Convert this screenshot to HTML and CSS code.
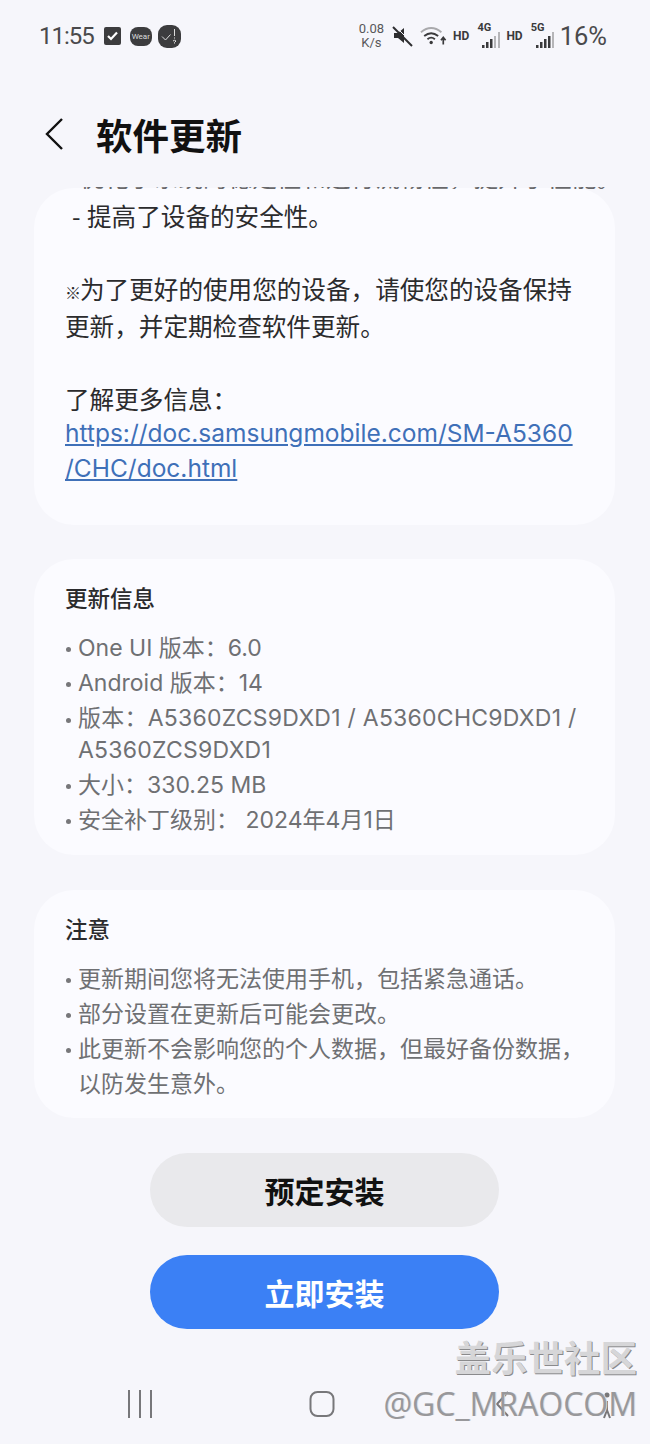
FILE: index.html
```html
<!DOCTYPE html>
<html lang="zh-CN">
<head>
    <meta charset="UTF-8">
    <meta name="viewport" content="width=device-width, initial-scale=1.0">
    <title>软件更新</title>
    <link rel="stylesheet" href="styles.css">
</head>
<body>
    <div class="phone">
        <div class="status-bar">
            <div class="status-left">
                <span class="clock">11:55</span>
                <svg width="17" height="18" viewBox="0 0 17 18"><rect width="17" height="18" rx="2" fill="#3c3c3e"/><path d="M4 9l3 3 6-6.500" fill="none" stroke="#fff" stroke-width="2.200"/></svg>
                <span class="wear-icon">Wear</span>
                <svg class="alert-icon" width="23" height="23" viewBox="0 0 23 23"><rect width="23" height="23" rx="9" fill="#3c3c3e"/><path d="M4 11.500l3.500 3.500 5-5.500" fill="none" stroke="#ddd" stroke-width="1"/><path d="M16.500 4v7M16.500 12.500v1M15 16q1.500-1.500 3 0l-1.500 1.500v1" fill="none" stroke="#ddd" stroke-width="1"/></svg>
            </div>
            <div class="status-right">
                <span class="speed">0.08<br>K/s</span>
                <svg class="mute" width="22" height="22" viewBox="0 0 22 22"><path d="M2 8h4l6-5v15l-6-5H2z" fill="#2d2d2f"/><path d="M1 2l19 19" stroke="#2d2d2f" stroke-width="2"/><path d="M1 2l19 19" stroke="#f6f6fb" stroke-width="1" transform="translate(1.500 -1.500)"/></svg>
                <svg class="wifi" width="27" height="22" viewBox="0 0 29 22"><path d="M1 7q11-9 22 0" fill="none" stroke="#a9a9ac" stroke-width="2"/><path d="M4.500 11q7.500-6 15 0M8 14.500q4-3.500 8 0" fill="none" stroke="#3a3a3c" stroke-width="2"/><circle cx="12" cy="18" r="1.800" fill="#3a3a3c"/><path d="M25 20v-7M22.500 15.500l2.500-3 2.500 3" fill="none" stroke="#3a3a3c" stroke-width="1.800"/></svg>
                <span class="hd">HD</span>
                <span class="signal">
                    <span class="net">4G</span>
                    <svg width="19" height="22" viewBox="0 0 19 22"><path d="M1 18h2.500v3H1zM5 15h2.500v6H5zM9 12h2.500v9H9z" fill="#3a3a3c"/><path d="M13 9h2v12h-2zM17 5h2v16h-2z" fill="#b5b5b8"/></svg>
                </span>
                <span class="hd">HD</span>
                <span class="signal">
                    <span class="net">5G</span>
                    <svg width="19" height="22" viewBox="0 0 19 22"><path d="M1 18h2.500v3H1zM5 15h2.500v6H5zM9 12h2.500v9H9zM13 9h2.500v12H13z" fill="#3a3a3c"/><path d="M17 5h2v16h-2z" fill="#b5b5b8"/></svg>
                </span>
                <span class="battery">16%</span>
            </div>
        </div>

        <div class="title-bar">
            <svg class="back" width="20" height="34" viewBox="0 0 20 34"><path d="M18 2L3 17l15 15" fill="none" stroke="#111" stroke-width="2.400"/></svg>
            <h1>软件更新</h1>
        </div>

        <div class="content">
            <div class="card card-notes">
                <div class="notes-clip">
                    <p class="note-line cut-line">优化了系统的稳定性和运行流畅性，提升了性能。</p>
                </div>
                <p class="note-line"><span class="dash">-</span>提高了设备的安全性。</p>
                <p class="note-line">&nbsp;</p>
                <p class="note-line"><span class="ref-mark">※</span>为了更好的使用您的设备，请使您的设备保持<br>更新，并定期检查软件更新。</p>
                <p class="note-line">&nbsp;</p>
                <p class="note-line">了解更多信息：</p>
                <a class="doc-link" href="#">https://doc.samsungmobile.com/SM-A5360<br>/CHC/doc.html</a>
            </div>

            <div class="card card-info">
                <h2>更新信息</h2>
                <ul class="info-list">
                    <li>One UI 版本：6.0</li>
                    <li>Android 版本：14</li>
                    <li class="tight">版本：A5360ZCS9DXD1 / A5360CHC9DXD1 / A5360ZCS9DXD1</li>
                    <li>大小：330.25 MB</li>
                    <li>安全补丁级别： 2024年4月1日</li>
                </ul>
            </div>

            <div class="card card-info card-last">
                <h2>注意</h2>
                <ul class="info-list">
                    <li>更新期间您将无法使用手机，包括紧急通话。</li>
                    <li>部分设置在更新后可能会更改。</li>
                    <li>此更新不会影响您的个人数据，但最好备份数据，以防发生意外。</li>
                </ul>
            </div>

            <div class="actions">
                <button type="button" class="btn btn-grey">预定安装</button>
                <button type="button" class="btn btn-blue">立即安装</button>
            </div>
        </div>

        <div class="nav-bar">
            <svg width="26" height="28" viewBox="0 0 26 28"><path d="M2 0v28M13 0v28M24 0v28" stroke="#77777a" stroke-width="2" fill="none"/></svg>
            <svg width="26" height="28" viewBox="0 0 26 28"><rect x="1.500" y="2" width="23" height="24" rx="7" fill="none" stroke="#77777a" stroke-width="2"/></svg>
            <svg width="26" height="28" viewBox="0 0 26 28"><path d="M17 2L6 14l11 12" fill="none" stroke="#77777a" stroke-width="2"/></svg>
            <svg class="a11y" width="20" height="28" viewBox="0 0 20 28"><circle cx="10" cy="3" r="2.500" fill="#77777a"/><path d="M10 9v9l-3 8M10 18l3 8" fill="none" stroke="#77777a" stroke-width="2"/></svg>
        </div>

        <div class="watermark">
            <div class="wm-title">盖乐世社区</div>
            <div class="wm-user">@GC_MRAOCOM</div>
        </div>
    </div>
</body>
</html>
```

FILE: styles.css
```css
* {
    box-sizing: border-box;
}
body {
    margin: 0;
    padding: 0;
    background-color: #f6f6fb;
    font-family: Inter, "Noto Sans CJK SC", sans-serif;
    color: #2b2b2d;
}
.phone {
    position: relative;
    width: 650px;
    height: 1444px;
    overflow: hidden;
}
.status-bar {
    height: 72px;
    padding: 0 43px 0 39px;
    display: flex;
    justify-content: space-between;
    align-items: center;
}
.status-left {
    display: flex;
    align-items: center;
    gap: 8px;
}
.clock {
    font-family: Roboto, sans-serif;
    font-size: 24px;
    letter-spacing: -1px;
    color: #4a4a4c;
    margin-right: 2px;
}
.wear-icon {
    width: 22px;
    height: 19px;
    margin-left: 1px;
    border-radius: 8px;
    background: #3c3c3e;
    color: #ddd;
    font-family: Roboto, sans-serif;
    font-size: 8px;
    line-height: 19px;
    text-align: center;
}
.alert-icon {
    margin-left: -2px;
}
.status-right {
    display: flex;
    align-items: center;
    gap: 8px;
}
.speed {
    font-family: Roboto, sans-serif;
    font-size: 13px;
    line-height: 14px;
    text-align: center;
    color: #58585a;
}
.wifi {
    margin-left: -2px;
}
.hd {
    margin-left: -2px;
    font-family: Roboto, sans-serif;
    font-size: 12px;
    font-weight: 700;
    color: #3a3a3c;
}
.signal {
    position: relative;
    width: 23px;
    height: 22px;
}
.net {
    position: absolute;
    left: 0;
    top: -4px;
    font-family: Roboto, sans-serif;
    font-size: 11px;
    font-weight: 700;
    color: #3a3a3c;
}
.signal svg {
    position: absolute;
    right: 0;
    top: 2px;
}
.battery {
    margin-left: -2px;
    font-family: Roboto, sans-serif;
    font-size: 25.500px;
    color: #4a4a4c;
}
.title-bar {
    height: 112px;
    padding: 12px 0 0 44px;
    display: flex;
    align-items: center;
    gap: 32px;
}
h1 {
    margin: 0;
    font-family: "Noto Sans CJK SC", sans-serif;
    font-size: 36.500px;
    font-weight: 700;
    color: #111;
}
.content {
    padding: 0 35px 0 34px;
}
.card {
    background-color: #fbfbff;
    border-radius: 40px;
    margin-bottom: 35px;
}
.card-notes {
    height: 337px;
    margin-top: 4px;
    margin-bottom: 34px;
    padding: 9px 31px 0;
    position: relative;
}
.notes-clip {
    position: absolute;
    left: 46px;
    top: -1px;
    height: 2px;
    overflow: hidden;
    opacity: 0.7;
}
.note-line {
    margin: 0;
    font-family: "Noto Sans CJK SC", sans-serif;
    font-size: 24.600px;
    line-height: 36.500px;
    color: #2b2b2d;
}
.note-line.cut-line {
    margin-top: -21px;
    line-height: 20px;
    white-space: nowrap;
}
.dash {
    display: inline-block;
    width: 22px;
    padding-left: 7px;
}
.ref-mark {
    display: inline-block;
    width: 15px;
    font-size: 16px;
    line-height: 1;
}
.doc-link {
    display: block;
    font-family: Inter, sans-serif;
    font-size: 24.500px;
    line-height: 35px;
    color: #3f70b8;
    text-decoration: underline;
    white-space: nowrap;
}
.card-info {
    padding: 21px 20px 17px 31px;
}
.card-last {
    padding-bottom: 16px;
}
h2 {
    margin: 0 0 17px;
    font-family: "Noto Sans CJK SC", sans-serif;
    font-size: 22.500px;
    line-height: 34px;
    font-weight: 500;
    color: #2b2b2d;
}
.info-list {
    margin: 0;
    padding: 0;
    list-style: none;
    font-size: 23px;
    line-height: 35px;
    color: #6f7073;
}
.info-list li {
    padding-left: 13px;
    position: relative;
}
.info-list li.tight {
    line-height: 32px;
    letter-spacing: 0.250px;
    margin-top: 1px;
    margin-bottom: 2px;
}
.info-list li::before {
    content: "";
    position: absolute;
    left: 1px;
    top: 16px;
    width: 5px;
    height: 5px;
    border-radius: 50%;
    background: #77777a;
}
.actions {
    display: flex;
    flex-direction: column;
    align-items: center;
    gap: 28px;
}
.btn {
    width: 349px;
    height: 74px;
    border: none;
    border-radius: 37px;
    font-family: "Noto Sans CJK SC", sans-serif;
    font-size: 30px;
    font-weight: 700;
}
.btn-grey {
    background-color: #e9e9ec;
    color: #111;
}
.btn-blue {
    background-color: #3b80f5;
    color: #fff;
}
.nav-bar {
    position: absolute;
    left: 127px;
    top: 1390px;
    display: flex;
    gap: 156px;
}
.a11y {
    position: absolute;
    left: 470px;
    top: 2px;
}
.watermark {
    position: absolute;
    right: 13px;
    top: 1332px;
    text-align: right;
}
.wm-title {
    font-family: "Noto Sans CJK SC", sans-serif;
    font-size: 36.500px;
    line-height: 50px;
    font-weight: 700;
    color: #d6d6d8;
    text-shadow: 1px 1px 0 #8a8a8c;
}
.wm-user {
    font-family: "Open Sans", sans-serif;
    font-size: 32px;
    line-height: 44px;
    color: #98989b;
    text-shadow: 1px 0 0 #dcdcde;
}
```
